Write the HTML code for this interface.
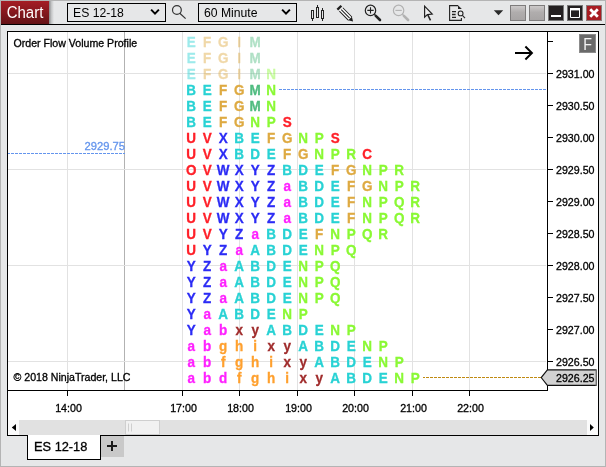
<!DOCTYPE html>
<html lang="en">
<head>
<meta charset="utf-8">
<title>Chart - ES 12-18</title>
<style>
html,body{margin:0;padding:0;}
body{width:606px;height:467px;overflow:hidden;background:#e6e7e8;font-family:"Liberation Sans",sans-serif;}
#win{position:relative;width:606px;height:467px;background:#e6e7e8;overflow:hidden;box-sizing:border-box;}
#win>*{position:absolute;box-sizing:border-box;}
#win{will-change:transform;}
.edge{background:#b4b4b4;}
.title{left:1px;top:1px;width:48px;height:23px;background:linear-gradient(#a51d25,#641216);color:#fff;font-size:15px;line-height:23px;text-align:center;}
.tsh{left:49px;top:1px;width:5px;height:23px;background:linear-gradient(90deg,rgba(0,0,0,.42),rgba(0,0,0,.16) 45%,rgba(0,0,0,0));}
.title span{display:inline-block;transform:scale(1,1.05);transform-origin:50% 72%;}
.tline{left:1px;top:24px;width:604px;height:1px;background:#000;}
.dd{top:3px;height:19px;border:1px solid #000;font-size:12.2px;line-height:19px;padding-left:5px;color:#000;white-space:nowrap;}
.frame{left:7px;top:31px;width:592px;height:405px;background:#fff;border:1px solid #000;}
.cv{left:0;top:0;}
.tb{left:0;top:0;}
.cv text{font-family:"Liberation Sans",sans-serif;}
.lbl{font-size:10.67px;fill:#000;}
.cap{font-size:10.6px;fill:#000;}
.lbl.blu{fill:#6495ed;stroke:#6495ed;font-size:11.2px;}
.lbl,.cap{stroke:#000;stroke-width:.3px;}
.tpo text{font-size:13.5px;font-weight:bold;text-anchor:middle;}
.fd{opacity:.45;}
.tpo text{stroke-width:.28px;}
.tq{fill:#28d2d4;stroke:#28d2d4;} .gd{fill:#deaa42;stroke:#deaa42;} .sg{fill:#50bc80;stroke:#50bc80;} .gr{fill:#8af934;stroke:#8af934;}
.rd{fill:#ff2029;stroke:#ff2029;} .bl{fill:#2b2bf5;stroke:#2b2bf5;} .mg{fill:#ff22ff;stroke:#ff22ff;} .or{fill:#ffa02e;stroke:#ffa02e;} .br{fill:#a02c2c;stroke:#a02c2c;}
.sb{left:8px;top:420px;width:590px;height:15px;background:#e1e1e1;}
.sbb{top:420px;width:11px;height:15px;background:#fbfbfb;}
.thumb{left:125px;top:420px;width:35px;height:15px;background:#f1f1f1;border:1px solid #cfcfcf;}
.tab{left:27px;top:435px;width:74px;height:25px;background:#fff;border:1px solid #000;border-top:none;font-size:12.8px;line-height:24px;text-align:left;padding-left:6px;color:#000;-webkit-text-stroke:.3px #000;}
.plus{left:101px;top:436px;width:23px;height:21px;background:#c9c9c9;}
</style>
</head>
<body>
<div id="win">
  <div class="frame"></div>
  <div class="sb"></div>
  <div class="sbb" style="left:8px"></div>
  <div class="sbb" style="left:587px"></div>
  <div class="thumb"></div>
  <div class="title"><span>Chart</span></div>
  <div class="tsh"></div>
  <div class="tline"></div>
  <svg class="tb" width="606" height="25" viewBox="0 0 606 25">
<path d="M151.1 9.6 L155 13.6 L158.9 9.6" fill="none" stroke="#000" stroke-width="2"/>
<path d="M282.1 9.6 L286 13.6 L289.9 9.6" fill="none" stroke="#000" stroke-width="2"/>
<g fill="none" stroke="#333" stroke-width="1.2"><circle cx="176.9" cy="10" r="4.4"/><path d="M179.8 13.3 L185.6 18.6"/></g>
<g fill="none" stroke="#222" stroke-width="1"><rect x="311.5" y="10.5" width="2" height="8"/><path d="M312.5 18.5V21"/><rect x="316.5" y="7.5" width="2" height="10"/><path d="M317.5 5V7.5"/><rect x="321.5" y="10.5" width="2" height="8"/><path d="M322.5 8V10.5M322.5 18.5V21"/></g>
<g transform="translate(338.7 7.0) rotate(45.5)"><rect x="-0.2" y="-2.8" width="2.3" height="5.6" fill="#1e1e1e"/><rect x="3.2" y="-2.9" width="13" height="5.8" fill="#fff"/><path d="M3.4 -2.4H16.4M3.6 0H15.6M3.4 2.4H16.4" stroke="#1e1e1e" stroke-width="1" fill="none"/><path d="M16.2 -2.5 L20.5 0 L16.2 2.5 Z" fill="#1e1e1e"/></g>
<g fill="none" stroke="#222"><circle cx="370.5" cy="10.4" r="5.2" stroke-width="1.2"/><path d="M367.3 10.4H373.7M370.5 7.2V13.6" stroke-width="1.1"/><path d="M374.3 14.2 L376 16" stroke-width="1.2"/><path d="M375.8 15.8 L380 20" stroke-width="2.6" stroke-linecap="round"/></g>
<g fill="none" stroke="#b2b2b2"><circle cx="398.6" cy="10.4" r="5.2" stroke-width="1.2"/><path d="M395.4 10.4H401.8" stroke-width="1.1"/><path d="M402.4 14.2 L404 16" stroke-width="1.2"/><path d="M403.9 15.8 L408.1 20" stroke-width="2.6" stroke-linecap="round"/></g>
<path d="M424.6 6.2 V17.2 L427.4 14.6 L432.2 14.1 Z" fill="#efefef" stroke="#222" stroke-width="1.2" stroke-linejoin="miter"/>
<path d="M427.8 14.8 L430.5 20.4" fill="none" stroke="#222" stroke-width="1.5"/>
<g fill="none" stroke="#222" stroke-width="1.1"><path d="M458 5.6 H449.6 V20.4 H461.4 V18"/><path d="M458 5.2 L461.8 9 H458 Z" fill="#222" stroke="none"/><path d="M452 11.7H456M452 14.5H455.6M452 17.3H456" stroke-width="1.3"/><circle cx="460.6" cy="13.4" r="2.4" fill="#e6e7e8"/><path d="M462.4 15.3 L465 18.2"/></g>
<path d="M493.8 10.2 H503.2 L498.5 15.2 Z" fill="#2a2a2a"/>
<defs><linearGradient id="gb" x1="0" y1="0" x2="0" y2="1"><stop offset="0" stop-color="#cfcccc"/><stop offset="0.45" stop-color="#b0adad"/><stop offset="1" stop-color="#a7a4a4"/></linearGradient></defs>
<rect x="510.5" y="5.5" width="15" height="15" fill="url(#gb)" stroke="#7e7c7c"/>
<rect x="529.5" y="5.5" width="15" height="15" fill="url(#gb)" stroke="#7e7c7c"/>
<rect x="548.5" y="5.5" width="15" height="15" fill="#231f20" stroke="#777"/>
<rect x="551" y="15" width="10" height="2" fill="#fff"/>
<rect x="567.5" y="5.5" width="15" height="15" fill="#231f20" stroke="#777"/>
<path d="M570.5 9 H579.5 V17.5 H570.5 Z" fill="none" stroke="#fff" stroke-width="1"/><rect x="570" y="8" width="10" height="2.4" fill="#fff"/>
<rect x="586.5" y="5.5" width="15" height="15" fill="#a81c22" stroke="#8c7c7c"/>
<path d="M590.2 9.2 L597.8 16.8 M597.8 9.2 L590.2 16.8" fill="none" stroke="#fff" stroke-width="2.8"/>
</svg>
  <div class="dd" style="left:67px;width:99px">ES 12-18</div>
  <div class="dd" style="left:198px;width:99px">60 Minute</div>
  <div class="tab">ES 12-18</div>
  <div class="plus"></div>
  <svg class="cv" width="606" height="467" viewBox="0 0 606 467">
<rect x="67" y="32" width="1" height="358" fill="#e2e2e2"/>
<rect x="182" y="32" width="1" height="358" fill="#e2e2e2"/>
<rect x="239" y="32" width="1" height="358" fill="#e2e2e2"/>
<rect x="297" y="32" width="1" height="358" fill="#e2e2e2"/>
<rect x="354" y="32" width="1" height="358" fill="#e2e2e2"/>
<rect x="412" y="32" width="1" height="358" fill="#e2e2e2"/>
<rect x="469" y="32" width="1" height="358" fill="#e2e2e2"/>
<rect x="124" y="32" width="1" height="358" fill="#b2b2b2"/>
<rect x="8" y="73" width="538" height="1" fill="#e2e2e2"/>
<rect x="8" y="169" width="538" height="1" fill="#e2e2e2"/>
<rect x="8" y="265" width="538" height="1" fill="#e2e2e2"/>
<rect x="8" y="361" width="538" height="1" fill="#e2e2e2"/>
<line x1="279" y1="89.5" x2="546" y2="89.5" stroke="#6495ed" stroke-width="1" stroke-dasharray="3 1"/>
<line x1="8" y1="153.5" x2="125" y2="153.5" stroke="#6495ed" stroke-width="1" stroke-dasharray="3 1" stroke-dashoffset="1"/>
<line x1="423" y1="377.5" x2="542" y2="377.5" stroke="#c08a12" stroke-width="1" stroke-dasharray="3 1" stroke-dashoffset="1"/>
<text class="lbl blu" x="125" y="150" text-anchor="end">2929.75</text>
<g class="tpo">
<g class="row fd" transform="translate(0 46.9) scale(1 1.11)"><text class="tq" x="191.2">E</text><text class="gd" x="207.2">F</text><text class="gd" x="223.2">G</text><text class="gd" x="239.2">I</text><text class="sg" x="255.2">M</text></g>
<g class="row fd" transform="translate(0 62.9) scale(1 1.11)"><text class="tq" x="191.2">E</text><text class="gd" x="207.2">F</text><text class="gd" x="223.2">G</text><text class="gd" x="239.2">I</text><text class="sg" x="255.2">M</text></g>
<g class="row fd" transform="translate(0 78.9) scale(1 1.11)"><text class="tq" x="191.2">E</text><text class="gd" x="207.2">F</text><text class="gd" x="223.2">G</text><text class="gd" x="239.2">I</text><text class="sg" x="255.2">M</text><text class="gr" x="271.2">N</text></g>
<g class="row" transform="translate(0 94.9) scale(1 1.11)"><text class="tq" x="191.2">B</text><text class="tq" x="207.2">E</text><text class="gd" x="223.2">F</text><text class="gd" x="239.2">G</text><text class="sg" x="255.2">M</text><text class="gr" x="271.2">N</text></g>
<g class="row" transform="translate(0 110.9) scale(1 1.11)"><text class="tq" x="191.2">B</text><text class="tq" x="207.2">E</text><text class="gd" x="223.2">F</text><text class="gd" x="239.2">G</text><text class="sg" x="255.2">M</text><text class="gr" x="271.2">N</text></g>
<g class="row" transform="translate(0 126.9) scale(1 1.11)"><text class="tq" x="191.2">B</text><text class="tq" x="207.2">E</text><text class="gd" x="223.2">F</text><text class="gd" x="239.2">G</text><text class="gr" x="255.2">N</text><text class="gr" x="271.2">P</text><text class="rd" x="287.2">S</text></g>
<g class="row" transform="translate(0 142.9) scale(1 1.11)"><text class="rd" x="191.2">U</text><text class="rd" x="207.2">V</text><text class="bl" x="223.2">X</text><text class="tq" x="239.2">B</text><text class="tq" x="255.2">E</text><text class="gd" x="271.2">F</text><text class="gd" x="287.2">G</text><text class="gr" x="303.2">N</text><text class="gr" x="319.2">P</text><text class="rd" x="335.2">S</text></g>
<g class="row" transform="translate(0 158.9) scale(1 1.11)"><text class="rd" x="191.2">U</text><text class="rd" x="207.2">V</text><text class="bl" x="223.2">X</text><text class="tq" x="239.2">B</text><text class="tq" x="255.2">D</text><text class="tq" x="271.2">E</text><text class="gd" x="287.2">F</text><text class="gd" x="303.2">G</text><text class="gr" x="319.2">N</text><text class="gr" x="335.2">P</text><text class="gr" x="351.2">R</text><text class="rd" x="367.2">C</text></g>
<g class="row" transform="translate(0 174.9) scale(1 1.11)"><text class="rd" x="191.2">O</text><text class="rd" x="207.2">V</text><text class="bl" x="223.2">W</text><text class="bl" x="239.2">X</text><text class="bl" x="255.2">Y</text><text class="bl" x="271.2">Z</text><text class="tq" x="287.2">B</text><text class="tq" x="303.2">D</text><text class="tq" x="319.2">E</text><text class="gd" x="335.2">F</text><text class="gd" x="351.2">G</text><text class="gr" x="367.2">N</text><text class="gr" x="383.2">P</text><text class="gr" x="399.2">R</text></g>
<g class="row" transform="translate(0 190.9) scale(1 1.11)"><text class="rd" x="191.2">U</text><text class="rd" x="207.2">V</text><text class="bl" x="223.2">W</text><text class="bl" x="239.2">X</text><text class="bl" x="255.2">Y</text><text class="bl" x="271.2">Z</text><text class="mg" x="287.2">a</text><text class="tq" x="303.2">B</text><text class="tq" x="319.2">D</text><text class="tq" x="335.2">E</text><text class="gd" x="351.2">F</text><text class="gd" x="367.2">G</text><text class="gr" x="383.2">N</text><text class="gr" x="399.2">P</text><text class="gr" x="415.2">R</text></g>
<g class="row" transform="translate(0 206.9) scale(1 1.11)"><text class="rd" x="191.2">U</text><text class="rd" x="207.2">V</text><text class="bl" x="223.2">W</text><text class="bl" x="239.2">X</text><text class="bl" x="255.2">Y</text><text class="bl" x="271.2">Z</text><text class="mg" x="287.2">a</text><text class="tq" x="303.2">B</text><text class="tq" x="319.2">D</text><text class="tq" x="335.2">E</text><text class="gd" x="351.2">F</text><text class="gr" x="367.2">N</text><text class="gr" x="383.2">P</text><text class="gr" x="399.2">Q</text><text class="gr" x="415.2">R</text></g>
<g class="row" transform="translate(0 222.9) scale(1 1.11)"><text class="rd" x="191.2">U</text><text class="rd" x="207.2">V</text><text class="bl" x="223.2">W</text><text class="bl" x="239.2">X</text><text class="bl" x="255.2">Y</text><text class="bl" x="271.2">Z</text><text class="mg" x="287.2">a</text><text class="tq" x="303.2">B</text><text class="tq" x="319.2">D</text><text class="tq" x="335.2">E</text><text class="gd" x="351.2">F</text><text class="gr" x="367.2">N</text><text class="gr" x="383.2">P</text><text class="gr" x="399.2">Q</text><text class="gr" x="415.2">R</text></g>
<g class="row" transform="translate(0 238.9) scale(1 1.11)"><text class="rd" x="191.2">U</text><text class="rd" x="207.2">V</text><text class="bl" x="223.2">Y</text><text class="bl" x="239.2">Z</text><text class="mg" x="255.2">a</text><text class="tq" x="271.2">B</text><text class="tq" x="287.2">D</text><text class="tq" x="303.2">E</text><text class="gd" x="319.2">F</text><text class="gr" x="335.2">N</text><text class="gr" x="351.2">P</text><text class="gr" x="367.2">Q</text><text class="gr" x="383.2">R</text></g>
<g class="row" transform="translate(0 254.9) scale(1 1.11)"><text class="rd" x="191.2">U</text><text class="bl" x="207.2">Y</text><text class="bl" x="223.2">Z</text><text class="mg" x="239.2">a</text><text class="tq" x="255.2">A</text><text class="tq" x="271.2">B</text><text class="tq" x="287.2">D</text><text class="tq" x="303.2">E</text><text class="gr" x="319.2">N</text><text class="gr" x="335.2">P</text><text class="gr" x="351.2">Q</text></g>
<g class="row" transform="translate(0 270.9) scale(1 1.11)"><text class="bl" x="191.2">Y</text><text class="bl" x="207.2">Z</text><text class="mg" x="223.2">a</text><text class="tq" x="239.2">A</text><text class="tq" x="255.2">B</text><text class="tq" x="271.2">D</text><text class="tq" x="287.2">E</text><text class="gr" x="303.2">N</text><text class="gr" x="319.2">P</text><text class="gr" x="335.2">Q</text></g>
<g class="row" transform="translate(0 286.9) scale(1 1.11)"><text class="bl" x="191.2">Y</text><text class="bl" x="207.2">Z</text><text class="mg" x="223.2">a</text><text class="tq" x="239.2">A</text><text class="tq" x="255.2">B</text><text class="tq" x="271.2">D</text><text class="tq" x="287.2">E</text><text class="gr" x="303.2">N</text><text class="gr" x="319.2">P</text><text class="gr" x="335.2">Q</text></g>
<g class="row" transform="translate(0 302.9) scale(1 1.11)"><text class="bl" x="191.2">Y</text><text class="bl" x="207.2">Z</text><text class="mg" x="223.2">a</text><text class="tq" x="239.2">A</text><text class="tq" x="255.2">B</text><text class="tq" x="271.2">D</text><text class="tq" x="287.2">E</text><text class="gr" x="303.2">N</text><text class="gr" x="319.2">P</text><text class="gr" x="335.2">Q</text></g>
<g class="row" transform="translate(0 318.9) scale(1 1.11)"><text class="bl" x="191.2">Y</text><text class="mg" x="207.2">a</text><text class="tq" x="223.2">A</text><text class="tq" x="239.2">B</text><text class="tq" x="255.2">D</text><text class="tq" x="271.2">E</text><text class="gr" x="287.2">N</text><text class="gr" x="303.2">P</text></g>
<g class="row" transform="translate(0 334.9) scale(1 1.11)"><text class="bl" x="191.2">Y</text><text class="mg" x="207.2">a</text><text class="mg" x="223.2">b</text><text class="br" x="239.2">x</text><text class="br" x="255.2">y</text><text class="tq" x="271.2">A</text><text class="tq" x="287.2">B</text><text class="tq" x="303.2">D</text><text class="tq" x="319.2">E</text><text class="gr" x="335.2">N</text><text class="gr" x="351.2">P</text></g>
<g class="row" transform="translate(0 350.9) scale(1 1.11)"><text class="mg" x="191.2">a</text><text class="mg" x="207.2">b</text><text class="or" x="223.2">g</text><text class="or" x="239.2">h</text><text class="or" x="255.2">i</text><text class="br" x="271.2">x</text><text class="br" x="287.2">y</text><text class="tq" x="303.2">A</text><text class="tq" x="319.2">B</text><text class="tq" x="335.2">D</text><text class="tq" x="351.2">E</text><text class="gr" x="367.2">N</text><text class="gr" x="383.2">P</text></g>
<g class="row" transform="translate(0 366.9) scale(1 1.11)"><text class="mg" x="191.2">a</text><text class="mg" x="207.2">b</text><text class="or" x="223.2">f</text><text class="or" x="239.2">g</text><text class="or" x="255.2">h</text><text class="or" x="271.2">i</text><text class="br" x="287.2">x</text><text class="br" x="303.2">y</text><text class="tq" x="319.2">A</text><text class="tq" x="335.2">B</text><text class="tq" x="351.2">D</text><text class="tq" x="367.2">E</text><text class="gr" x="383.2">N</text><text class="gr" x="399.2">P</text></g>
<g class="row" transform="translate(0 382.9) scale(1 1.11)"><text class="mg" x="191.2">a</text><text class="mg" x="207.2">b</text><text class="mg" x="223.2">d</text><text class="or" x="239.2">f</text><text class="or" x="255.2">g</text><text class="or" x="271.2">h</text><text class="or" x="287.2">i</text><text class="br" x="303.2">x</text><text class="br" x="319.2">y</text><text class="tq" x="335.2">A</text><text class="tq" x="351.2">B</text><text class="tq" x="367.2">D</text><text class="tq" x="383.2">E</text><text class="gr" x="399.2">N</text><text class="gr" x="415.2">P</text></g>
</g>
<rect x="547" y="32" width="1" height="359" fill="#000"/>
<rect x="8" y="390" width="540" height="1" fill="#000"/>
<rect x="548" y="41" width="5" height="1" fill="#000"/>
<rect x="548" y="73" width="5" height="1" fill="#000"/>
<rect x="548" y="105" width="5" height="1" fill="#000"/>
<rect x="548" y="137" width="5" height="1" fill="#000"/>
<rect x="548" y="169" width="5" height="1" fill="#000"/>
<rect x="548" y="201" width="5" height="1" fill="#000"/>
<rect x="548" y="233" width="5" height="1" fill="#000"/>
<rect x="548" y="265" width="5" height="1" fill="#000"/>
<rect x="548" y="297" width="5" height="1" fill="#000"/>
<rect x="548" y="329" width="5" height="1" fill="#000"/>
<rect x="548" y="361" width="5" height="1" fill="#000"/>
<text class="lbl" x="556" y="77.9">2931.00</text>
<text class="lbl" x="556" y="109.9">2930.50</text>
<text class="lbl" x="556" y="141.9">2930.00</text>
<text class="lbl" x="556" y="173.9">2929.50</text>
<text class="lbl" x="556" y="205.9">2929.00</text>
<text class="lbl" x="556" y="237.9">2928.50</text>
<text class="lbl" x="556" y="269.9">2928.00</text>
<text class="lbl" x="556" y="301.9">2927.50</text>
<text class="lbl" x="556" y="333.9">2927.00</text>
<text class="lbl" x="556" y="365.9">2926.50</text>
<rect x="67" y="391" width="1" height="5" fill="#000"/>
<text class="lbl" x="68.5" y="412" text-anchor="middle">14:00</text>
<rect x="182" y="391" width="1" height="5" fill="#000"/>
<text class="lbl" x="183.5" y="412" text-anchor="middle">17:00</text>
<rect x="239" y="391" width="1" height="5" fill="#000"/>
<text class="lbl" x="240.5" y="412" text-anchor="middle">18:00</text>
<rect x="297" y="391" width="1" height="5" fill="#000"/>
<text class="lbl" x="298.5" y="412" text-anchor="middle">19:00</text>
<rect x="354" y="391" width="1" height="5" fill="#000"/>
<text class="lbl" x="355.5" y="412" text-anchor="middle">20:00</text>
<rect x="412" y="391" width="1" height="5" fill="#000"/>
<text class="lbl" x="413.5" y="412" text-anchor="middle">21:00</text>
<rect x="469" y="391" width="1" height="5" fill="#000"/>
<text class="lbl" x="470.5" y="412" text-anchor="middle">22:00</text>
<path d="M541.2 377.6 L547.4 369.9 H596.4 V385.4 H547.4 Z" fill="#d2d2d2"/>
<path d="M596.4 369.9 H547.4 L541.2 377.6 L547.4 385.4 H596.4" fill="none" stroke="#111" stroke-width="1.1"/>
<path d="M596.3 369.4 V385.9" fill="none" stroke="#6e6e6e" stroke-width="1.4"/>
<text class="lbl" x="556" y="382.2">2926.25</text>
<path d="M515 53 H532 M525.4 46.5 L531.9 53 L525.4 59.5" fill="none" stroke="#000" stroke-width="2"/>
<rect x="579.5" y="34.5" width="16" height="18" fill="#6a6a6a" stroke="#8c8c8c"/>
<text transform="translate(587.6 49.8) scale(0.84 1)" text-anchor="middle" font-size="17" fill="#f4f4f4">F</text>
<path d="M11.8 427.5 L16 424 V431 Z" fill="#000"/>
<path d="M593.8 427.5 L590 424 V431 Z" fill="#000"/>
<path d="M128.5 423.5V431.5M131.5 423.5V431.5" stroke="#cfcfcf" stroke-width="1" fill="none"/>
<path d="M107 446H117M112 441V451" stroke="#1a1a1a" stroke-width="2" fill="none"/>
<text class="cap" x="13.5" y="47">Order Flow Volume Profile</text>
<text class="cap" x="13.5" y="381">© 2018 NinjaTrader, LLC</text>
</svg>
  <div class="edge" style="left:0;top:0;width:606px;height:1px"></div>
  <div class="edge" style="left:0;top:0;width:1px;height:467px"></div>
  <div class="edge" style="left:0;top:466px;width:606px;height:1px"></div>
  <div class="edge" style="left:605px;top:0;width:1px;height:467px"></div>
</div>
</body>
</html>
